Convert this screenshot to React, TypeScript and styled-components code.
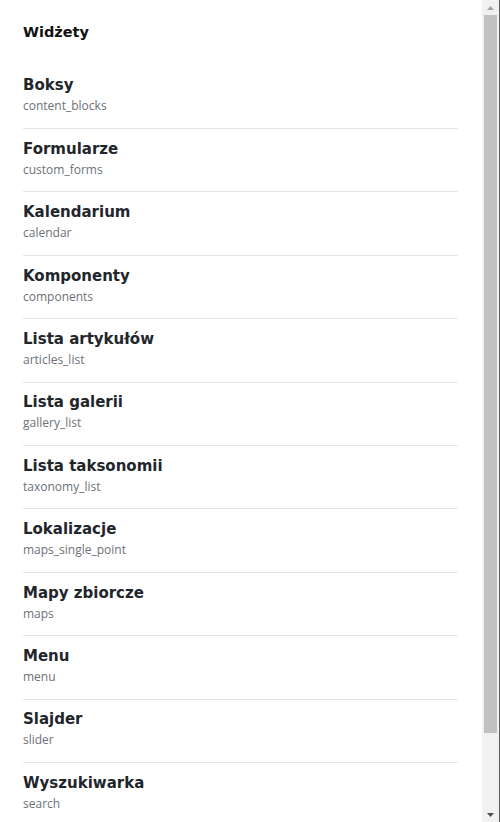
import React from "react";
import styled, { createGlobalStyle } from "styled-components";

const GlobalStyle = createGlobalStyle`
  html, body { margin: 0; padding: 0; background: #ffffff; overflow: hidden; }
  body { font-family: "Open Sans", sans-serif; }
`;

const Frame = styled.div`
  display: flex;
  height: 100vh;
  box-sizing: border-box;
  border-right: 1px solid #5f5f5f;
`;

const Content = styled.div`
  flex: 1;
  min-width: 0;
  overflow: hidden;
`;

const ScrollBar = styled.div`
  width: 17px;
  flex: 0 0 17px;
  display: flex;
  flex-direction: column;
  background: #f1f1f1;
`;

const ArrowButton = styled.div`
  height: 15px;
  flex: 0 0 15px;
  display: flex;
  align-items: center;
  justify-content: center;
`;

const Track = styled.div`
  flex: 1;
  padding: 0 2px;
`;

const Thumb = styled.div`
  height: 718px;
  background: #c1c1c1;
`;

const Page = styled.div`
  padding: 20px 24px 82px 23px;
`;

const Heading = styled.h1`
  margin: 0 0 21.6px;
  font-family: "DejaVu Sans", sans-serif;
  font-weight: 700;
  font-size: 14.5px;
  line-height: 24px;
  color: #111111;
`;

const List = styled.ul`
  list-style: none;
  margin: 0;
  padding: 0;
`;

const Item = styled.li<{ $last?: boolean }>`
  padding: 8.9px 0 12.5px;
  border-bottom: 1px solid ${(p) => (p.$last ? "transparent" : "#e3e4e6")};
`;

const Title = styled.div`
  font-family: "DejaVu Sans", sans-serif;
  font-weight: 700;
  font-size: 15px;
  line-height: 22px;
  color: #22262b;
`;

const Code = styled.div`
  font-family: "Open Sans", sans-serif;
  font-size: 12px;
  line-height: 19px;
  color: #6c7178;
`;

const widgets: [string, string][] = [
  ["Boksy", "content_blocks"],
  ["Formularze", "custom_forms"],
  ["Kalendarium", "calendar"],
  ["Komponenty", "components"],
  ["Lista artykułów", "articles_list"],
  ["Lista galerii", "gallery_list"],
  ["Lista taksonomii", "taxonomy_list"],
  ["Lokalizacje", "maps_single_point"],
  ["Mapy zbiorcze", "maps"],
  ["Menu", "menu"],
  ["Slajder", "slider"],
  ["Wyszukiwarka", "search"],
];

export default function App() {
  return (
    <>
      <GlobalStyle />
      <Frame>
        <Content>
          <Page>
            <Heading>Widżety</Heading>
            <List>
              {widgets.map(([name, code], i) => (
                <Item key={code} $last={i === widgets.length - 1}>
                  <Title>{name}</Title>
                  <Code>{code}</Code>
                </Item>
              ))}
            </List>
          </Page>
        </Content>
        <ScrollBar>
          <ArrowButton>
            <svg width="7" height="4" viewBox="0 0 7 4">
              <polygon points="3.5,0 7,4 0,4" fill="#a3a3a3" />
            </svg>
          </ArrowButton>
          <Track>
            <Thumb />
          </Track>
          <ArrowButton>
            <svg width="7" height="4" viewBox="0 0 7 4">
              <polygon points="0,0 7,0 3.5,4" fill="#505050" />
            </svg>
          </ArrowButton>
        </ScrollBar>
      </Frame>
    </>
  );
}
